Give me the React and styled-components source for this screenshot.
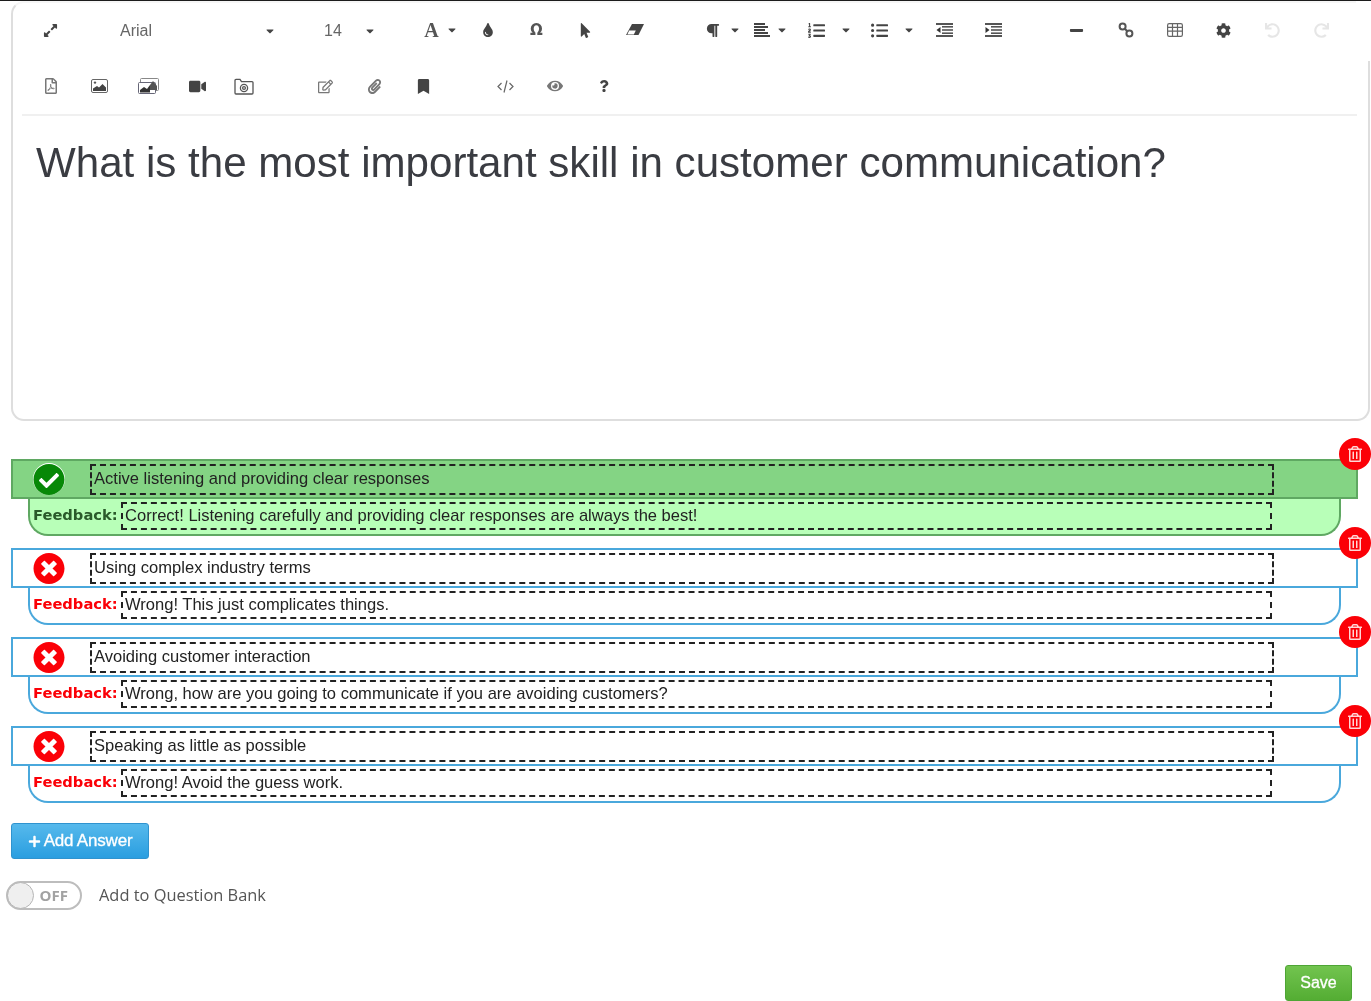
import React from 'react'
import styled, { createGlobalStyle } from 'styled-components'
import {
  FaExpandAlt, FaTint, FaMousePointer, FaParagraph, FaListOl, FaListUl,
  FaMinus, FaCog, FaUndo, FaRedo, FaRegFilePdf, FaVideo, FaRegEdit, FaPaperclip, FaBookmark,
  FaEye, FaQuestion, FaCheckCircle, FaTimesCircle, FaRegTrashAlt, FaPlus, FaCaretDown,
} from 'react-icons/fa'

const GlobalStyle = createGlobalStyle`
  html, body {
    margin: 0;
    background: #fff;
  }
  body {
    font-family: 'Liberation Sans', Arial, sans-serif;
    overflow: hidden;
  }
`

const Page = styled.div`
  width: 1371px;
  height: 1001px;
  border-top: 1px solid #1c1c1c;
  box-sizing: border-box;
  display: flex;
  flex-direction: column;
  padding-left: 11px;
  filter: blur(0.35px);
`

const Editor = styled.div`
  position: relative;
  width: 1359px;
  height: 420px;
  box-sizing: border-box;
  border: 2px solid #dedede;
  border-top-color: #f6f6f6;
  border-radius: 13px;
  padding: 0 11px 0 9px;
  /* the top right corner of the frame is cut off in the page */
  &::after {
    content: '';
    position: absolute;
    top: -2px;
    right: -2px;
    width: 14px;
    height: 60px;
    background: #fff;
  }
`

const Toolbar = styled.div`
  height: 113px;
  box-sizing: border-box;
  border-bottom: 2px solid #f0f0f0;
`

const ToolRow = styled.div`
  height: 56px;
  display: flex;
  align-items: center;
  padding-left: 4px;
  &:first-child {
    height: 55px;
    padding-bottom: 1px;
    box-sizing: border-box;
  }
`

const Tool = styled.div`
  width: ${p => p.$w || 49}px;
  margin-left: ${p => p.$ml || 0}px;
  flex-shrink: 0;
  display: flex;
  align-items: center;
  justify-content: center;
  gap: ${p => p.$gap || 0}px;
  color: ${p => (p.$off ? '#e6e6e6' : p.$soft ? '#777' : '#444')};
  font-size: ${p => p.$size || 15}px;
`

const Select = styled.div`
  width: ${p => p.$w}px;
  flex-shrink: 0;
  box-sizing: border-box;
  padding: 1px ${p => p.$pr}px 0 ${p => p.$pl}px;
  display: flex;
  align-items: center;
  justify-content: space-between;
  color: #666;
  font-size: 16px;
`

const Caret = styled(FaCaretDown)`
  color: #444;
  font-size: 12px;
  flex-shrink: 0;
`

const SerifA = styled.span`
  font-family: 'Liberation Serif', serif;
  font-weight: 700;
  font-size: 20px;
  line-height: 1;
  color: #555;
`

const Glyph = styled.span`
  font-family: 'DejaVu Sans', sans-serif;
  font-weight: 700;
  font-size: 15px;
  line-height: 1;
  color: #555;
`

const Question = styled.div`
  padding: 22px 0 0 14px;
  font-size: 42.1px;
  line-height: 50px;
  color: #3a3c42;
  white-space: nowrap;
`

const Answers = styled.div`
  margin-top: 38px;
  display: flex;
  flex-direction: column;
  gap: 12px;
`

const AnswerItem = styled.div`
  position: relative;
  width: 1347px;
`

const AnswerRow = styled.div`
  height: 40px;
  box-sizing: border-box;
  display: flex;
  align-items: center;
  border: 2px solid ${p => (p.$correct ? '#5fa862' : '#4aa8dc')};
  background: ${p => (p.$correct ? '#84d484' : '#fff')};
  padding-left: 20px;
`

const FeedbackRow = styled.div`
  height: 37px;
  width: 1313px;
  margin-left: 17px;
  box-sizing: border-box;
  display: flex;
  align-items: center;
  border: 2px solid ${p => (p.$correct ? '#5fa862' : '#4aa8dc')};
  border-top: 0;
  border-radius: 0 0 20px 20px;
  background: ${p => (p.$correct ? '#b8ffb8' : '#fff')};
  padding: 0 0 1px 3px;
`

const StatusIcon = styled.div`
  width: 32px;
  height: 32px;
  border-radius: 50%;
  display: flex;
  align-items: center;
  justify-content: center;
  flex-shrink: 0;
  background: #fff;
  color: ${p => (p.$correct ? '#078807' : '#fb0007')};
  font-size: 37px;
  svg {
    display: block;
  }
`

const DashedField = styled.div`
  box-sizing: border-box;
  flex-shrink: 0;
  height: ${p => p.$h}px;
  width: ${p => p.$w}px;
  margin-left: ${p => p.$ml || 0}px;
  border: 2px dashed #222;
  padding: 0 0 1px 2px;
  display: flex;
  align-items: center;
  font-size: 16.55px;
  color: #222;
  white-space: nowrap;
`

const FeedbackLabel = styled.span`
  width: 88px;
  flex-shrink: 0;
  margin-top: -3px;
  font-family: 'DejaVu Sans', sans-serif;
  font-weight: 700;
  font-size: 14.7px;
  white-space: nowrap;
  color: ${p => (p.$correct ? '#2a5a2a' : '#fb0007')};
`

const DeleteBtn = styled.div`
  position: absolute;
  top: -21px;
  right: -13px;
  width: 32px;
  height: 32px;
  border-radius: 50%;
  background: #fb0007;
  color: #ffd6d6;
  display: flex;
  align-items: center;
  justify-content: center;
  font-size: 16px;
`

const AddButton = styled.div`
  margin-top: 20px;
  width: 138px;
  height: 36px;
  box-sizing: border-box;
  border: 1px solid #2f93cf;
  border-radius: 3px;
  background: linear-gradient(#56b9ec, #2a9ee0);
  color: #fff;
  font-size: 17px;
  -webkit-text-stroke: 0.3px #fff;
  display: flex;
  align-items: center;
  justify-content: center;
  gap: 3px;
  letter-spacing: -0.2px;
`

const ToggleRow = styled.div`
  margin: 22px 0 0 -5px;
  display: flex;
  align-items: center;
  gap: 17px;
`

const Toggle = styled.div`
  width: 76px;
  height: 29px;
  box-sizing: border-box;
  border: 2px solid #bdbdbd;
  border-radius: 15px;
  position: relative;
  display: flex;
  align-items: center;
  justify-content: flex-end;
  padding: 0 12px 2px 0;
  font-family: 'Open Sans', sans-serif;
  font-weight: 700;
  font-size: 15px;
  color: #a2a2a2;
`

const Knob = styled.div`
  position: absolute;
  left: -1px;
  top: -1px;
  width: 27px;
  height: 27px;
  border-radius: 50%;
  background: #efefef;
  border: 1px solid #b5b5b5;
  box-sizing: border-box;
`

const ToggleLabel = styled.span`
  font-family: 'Open Sans', sans-serif;
  font-size: 16.4px;
  line-height: 22px;
  margin-top: -2px;
  color: #555;
`

const Footer = styled.div`
  margin-top: auto;
  display: flex;
  justify-content: flex-end;
  padding-right: 19px;
`

const SaveButton = styled.div`
  width: 67px;
  height: 36px;
  box-sizing: border-box;
  border: 1px solid #4ea535;
  border-radius: 3px;
  background: linear-gradient(#72c44f, #54ad33);
  color: #fff;
  font-size: 16px;
  -webkit-text-stroke: 0.3px #fff;
  display: flex;
  align-items: center;
  justify-content: center;
`

const answers = [
  { text: 'Active listening and providing clear responses', feedback: 'Correct! Listening carefully and providing clear responses are always the best!', correct: true },
  { text: 'Using complex industry terms', feedback: 'Wrong! This just complicates things.' },
  { text: 'Avoiding customer interaction', feedback: 'Wrong, how are you going to communicate if you are avoiding customers?' },
  { text: 'Speaking as little as possible', feedback: 'Wrong! Avoid the guess work.' },
]

const FolderCamera = () => (
  <svg width="20" height="17" viewBox="0 0 20 17" fill="none" stroke="#555" strokeWidth="1.3">
    <path d="M1 15V2.5C1 1.8 1.4 1.4 2 1.4h4l1.5 2.2H18c.6 0 1 .4 1 1V15c0 .6-.4 1-1 1H2c-.6 0-1-.4-1-1z" />
    <circle cx="10" cy="10" r="3.6" />
    <circle cx="10" cy="10" r="1.4" />
  </svg>
)

const EraserIcon = () => (
  <svg width="18" height="13" viewBox="0 0 18 13">
    <path d="M6 0h12l-5.5 11H0z" fill="#444" />
    <path d="M3.2 6.5h6.6L7.8 10.4H1.3z" fill="#fff" />
  </svg>
)

const AlignIcon = () => (
  <svg width="16" height="14" viewBox="0 0 16 14" fill="#444">
    <rect y="0" width="11" height="2" />
    <rect y="3" width="14" height="2" />
    <rect y="6" width="11" height="2" />
    <rect y="9" width="14" height="2" />
    <rect y="12" width="16" height="2" />
  </svg>
)

const IndentIcon = ({ flip }) => (
  <svg width="17" height="14" viewBox="0 0 17 14" fill="#555">
    <rect width="17" height="2" />
    <rect y="12" width="17" height="2" />
    <rect x="6" y="3" width="11" height="1.6" />
    <rect x="6" y="6.2" width="11" height="1.6" />
    <rect x="6" y="9.4" width="11" height="1.6" />
    <path d={flip ? 'M0.5 4v6L4.5 7z' : 'M4.5 4v6L0.5 7z'} fill="#333" />
  </svg>
)

const LinkIcon = () => (
  <svg width="16" height="16" viewBox="0 0 16 16" fill="none" stroke="#555" strokeWidth="2">
    <circle cx="4.6" cy="4.4" r="3" />
    <circle cx="11.4" cy="11.4" r="3" />
    <path d="M6.8 6.6l2.4 2.6" />
  </svg>
)

const TableIcon = () => (
  <svg width="16" height="14" viewBox="0 0 16 14" fill="none" stroke="#666" strokeWidth="1.2">
    <rect x="0.6" y="0.6" width="14.8" height="12.8" rx="1.6" />
    <path d="M0.6 4.4h14.8M0.6 8.2h14.8M5.5 0.6v12.8M10.5 0.6v12.8" />
  </svg>
)

const ImageIcon = () => (
  <svg width="17" height="14" viewBox="0 0 17 14">
    <rect x="0.5" y="0.5" width="16" height="13" rx="1.5" fill="#fff" stroke="#666" />
    <path d="M2 12V9.5L6 7l2 1.5L11.5 5 15 8.5V12z" fill="#444" />
    <circle cx="4" cy="3.6" r="1.2" fill="#555" />
  </svg>
)

const ImagesIcon = () => (
  <svg width="21" height="16" viewBox="0 0 21 16">
    <rect x="2.5" y="0.5" width="18" height="12" rx="1" fill="#fff" stroke="#888" />
    <rect x="0.5" y="4.5" width="17" height="11" rx="1" fill="#fff" stroke="#667" />
    <path d="M2 14.5V12l4-3 3 2 3-4v7.5z" fill="#333" />
    <path d="M12 7l3-4 4 5v4h-7z" fill="#555" />
  </svg>
)

const CodeIcon = () => (
  <svg width="17" height="13" viewBox="0 0 17 13" fill="none" stroke="#666" strokeWidth="1.2">
    <path d="M4.5 3L1 6.5 4.5 10M12.5 3L16 6.5 12.5 10M10 0.5L7 12.5" />
  </svg>
)

const Answer = ({ text, feedback, correct }) => (
  <AnswerItem>
    <AnswerRow $correct={correct}>
      <StatusIcon $correct={correct}>
        {correct ? <FaCheckCircle /> : <FaTimesCircle />}
      </StatusIcon>
      <DashedField $w={1184} $h={31} $ml={25}>{text}</DashedField>
    </AnswerRow>
    <FeedbackRow $correct={correct}>
      <FeedbackLabel $correct={correct}>Feedback:</FeedbackLabel>
      <DashedField $w={1151} $h={28}>{feedback}</DashedField>
    </FeedbackRow>
    <DeleteBtn><FaRegTrashAlt /></DeleteBtn>
  </AnswerItem>
)

const App = () => (
  <>
    <GlobalStyle />
    <Page>
      <Editor>
        <Toolbar>
          <ToolRow>
            <Tool><FaExpandAlt /></Tool>
            <Select $w={211} $pl={45} $pr={10}>Arial<Caret /></Select>
            <Select $w={99} $pl={38} $pr={9}>14<Caret /></Select>
            <Tool $w={44} $ml={34} $gap={7}><SerifA>A</SerifA><Caret /></Tool>
            <Tool $size={14}><FaTint /></Tool>
            <Tool><Glyph>Ω</Glyph></Tool>
            <Tool><FaMousePointer /></Tool>
            <Tool><EraserIcon /></Tool>
            <Tool $ml={39} $gap={9}><FaParagraph /><Caret /></Tool>
            <Tool $w={47} $gap={6}><AlignIcon /><Caret /></Tool>
            <Tool $w={71} $gap={15} $size={17}><FaListOl /><Caret /></Tool>
            <Tool $w={55} $gap={15} $size={17}><FaListUl /><Caret /></Tool>
            <Tool><IndentIcon /></Tool>
            <Tool><IndentIcon flip /></Tool>
            <Tool $ml={34}><FaMinus /></Tool>
            <Tool><LinkIcon /></Tool>
            <Tool><TableIcon /></Tool>
            <Tool><FaCog /></Tool>
            <Tool $off><FaUndo /></Tool>
            <Tool $off><FaRedo /></Tool>
          </ToolRow>
          <ToolRow>
            <Tool $size={16} $soft><FaRegFilePdf /></Tool>
            <Tool><ImageIcon /></Tool>
            <Tool><ImagesIcon /></Tool>
            <Tool $size={17}><FaVideo /></Tool>
            <Tool $w={43}><FolderCamera /></Tool>
            <Tool $ml={36} $soft><FaRegEdit /></Tool>
            <Tool $soft><FaPaperclip /></Tool>
            <Tool><FaBookmark /></Tool>
            <Tool $ml={33}><CodeIcon /></Tool>
            <Tool $size={16} $soft><FaEye /></Tool>
            <Tool $size={12}><FaQuestion /></Tool>
          </ToolRow>
        </Toolbar>
        <Question>What is the most important skill in customer communication?</Question>
      </Editor>
      <Answers>
        {answers.map(a => <Answer key={a.text} {...a} />)}
      </Answers>
      <AddButton><FaPlus size={13} />Add Answer</AddButton>
      <ToggleRow>
        <Toggle>OFF<Knob /></Toggle>
        <ToggleLabel>Add to Question Bank</ToggleLabel>
      </ToggleRow>
      <Footer><SaveButton>Save</SaveButton></Footer>
    </Page>
  </>
)

export default App
